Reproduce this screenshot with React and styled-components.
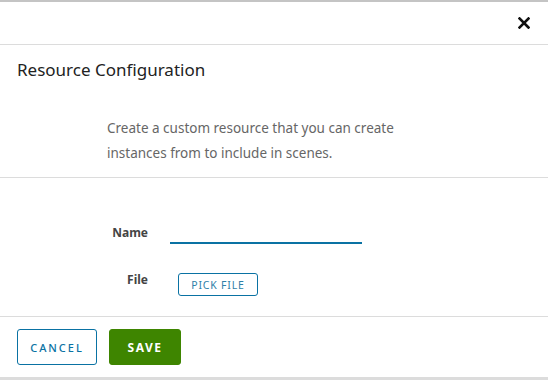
import React from 'react';
import styled, { createGlobalStyle } from 'styled-components';

const Global = createGlobalStyle`
  html, body { margin: 0; padding: 0; background: #fff; }
  body { font-family: "Noto Sans", "Open Sans", sans-serif; color: #333; }
`

// dialog shell
const Dialog = styled.section`
  width: 548px;
  height: 380px;
  box-sizing: border-box;
  border-top: 2px solid #c4c4c4;
  border-bottom: 3px solid #dcdcdc;
  display: flex;
  flex-direction: column;
`

const Header = styled.header`
  height: 42px;
  border-bottom: 1px solid #dcdcdc;
  display: flex;
  align-items: center;
  justify-content: flex-end;
  padding-right: 18px;
`

const CloseButton = styled.button`
  border: none;
  background: none;
  padding: 0;
  width: 12px;
  height: 12px;
  display: flex;
  cursor: pointer;
`

const Title = styled.h2`
  margin: 0;
  padding: 14px 17px 0;
  font-size: 17px;
  font-weight: 400;
  line-height: 22px;
  color: #222;
`

const Intro = styled.div`
  padding: 35px 0 11px 107px;
  border-bottom: 1px solid #dcdcdc;
`

const Description = styled.p`
  margin: 0;
  width: 300px;
  font-size: 13.5px;
  line-height: 25px;
  color: #666;
`

const Form = styled.div`
  flex: 1;
  display: flex;
  flex-direction: column;
  gap: 27px;
  padding-top: 42px;
`

const Row = styled.div`
  display: grid;
  grid-template-columns: 148px 192px;
  column-gap: 22px;
  align-items: ${p => p.align || 'center'};
`

const Label = styled.label`
  text-align: right;
  font-size: 12px;
  font-weight: 700;
  color: #444;
`

const Input = styled.input`
  height: 22px;
  border: none;
  border-bottom: 2px solid #0a72a3;
  outline: none;
  padding: 0;
  font: inherit;
  background: transparent;
`

const PickButton = styled.button`
  justify-self: start;
  margin-left: 8px;
  margin-top: 2px;
  width: 80px;
  height: 23px;
  border: 1px solid #0a72a3;
  border-radius: 3px;
  background: #fff;
  color: #2f7fa8;
  font-family: inherit;
  font-size: 10.5px;
  letter-spacing: 0.8px;
  padding: 0;
`

const Footer = styled.footer`
  border-top: 1px solid #dcdcdc;
  padding: 12px 17px 12px;
  display: flex;
  gap: 12px;
`

const FooterButton = styled.button`
  width: ${p => p.width}px;
  height: 36px;
  box-sizing: border-box;
  border-radius: 3px;
  border: 1px solid ${p => p.primary ? '#3e8500' : '#0a72a3'};
  background: ${p => p.primary ? '#3e8500' : '#fff'};
  color: ${p => p.primary ? '#fff' : '#0a72a3'};
  font-family: inherit;
  font-size: ${p => p.primary ? '12px' : '11px'};
  font-weight: ${p => p.primary ? 700 : 500};
  letter-spacing: ${p => p.primary ? '1.5px' : '2px'};
  padding: 0;
`

const App = () => {
  return (
    <Dialog>
      <Global />
      <Header>
        <CloseButton aria-label="close">
          <svg width="12" height="12" viewBox="0 0 12 12">
            <path d="M1.5 1.5 L10.5 10.5 M10.5 1.5 L1.5 10.5" stroke="#111" strokeWidth="2.6" strokeLinecap="square" />
          </svg>
        </CloseButton>
      </Header>
      <Title>Resource Configuration</Title>
      <Intro>
        <Description>
          Create a custom resource that you can create instances from to include in scenes.
        </Description>
      </Intro>
      <Form>
        <Row>
          <Label>Name</Label>
          <Input />
        </Row>
        <Row align="start">
          <Label>File</Label>
          <PickButton>PICK FILE</PickButton>
        </Row>
      </Form>
      <Footer>
        <FooterButton width={80}>CANCEL</FooterButton>
        <FooterButton width={72} primary>SAVE</FooterButton>
      </Footer>
    </Dialog>
  )
}

export default App
